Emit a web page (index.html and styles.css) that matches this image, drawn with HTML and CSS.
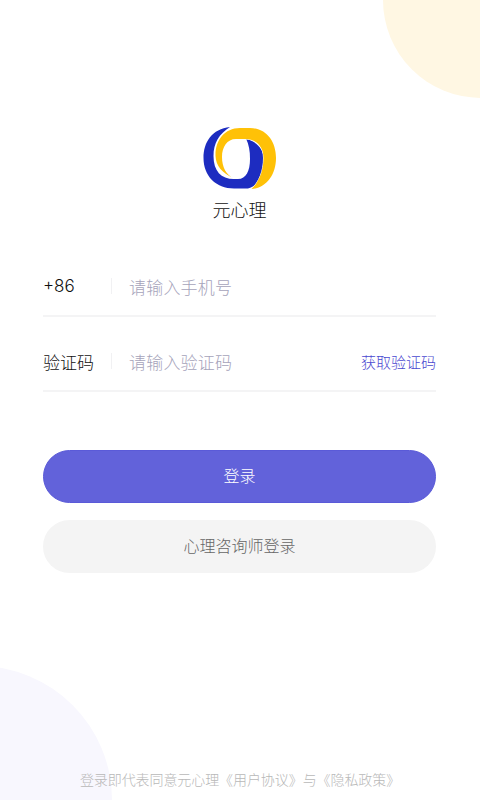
FILE: index.html
```html
<!DOCTYPE html>
<html lang="zh">
<head>
<meta charset="utf-8">
<title>元心理</title>
<link rel="stylesheet" href="styles.css">
</head>
<body>
<main class="page">
  <div class="blob blob-top"></div>
  <div class="blob blob-bottom"></div>
  <div class="brand">
    <svg class="logo" viewBox="203 125 74 64" aria-hidden="true">
      <path fill="#1d2cc0" d="M230 126C212 128 203.5 141 203.5 157C203.5 175 216 187.5 234 187.5H248C258 186 263.5 172 263.5 157C263.5 148 257 141 246 137.5C249 144 250 150 250 158C250 170 246 178 238 178H234C221 178 213.5 170 213.5 155C213.5 142 219 133 230 126Z"/>
      <path fill="#ffc107" stroke="#fff" stroke-width="1" paint-order="stroke" d="M234 177.5C222 172 216 165 215.5 155C215 140 224 127 240 127H250C266 127 276 140 276 157C276 174 266 187 251.5 188C259 181 263.5 170 263.5 157C263.5 146 257 138 245 138H236C227 138 222 146 222 156C222 166 226 174 234 177.5Z"/>
    </svg>
    <div class="brand-name">元心理</div>
  </div>
  <form class="form">
    <div class="field">
      <span class="field-label">+86</span>
      <span class="field-sep"></span>
      <span class="field-hint">请输入手机号</span>
    </div>
    <div class="field">
      <span class="field-label">验证码</span>
      <span class="field-sep"></span>
      <span class="field-hint">请输入验证码</span>
      <span class="field-action">获取验证码</span>
    </div>
  </form>
  <div class="actions">
    <div class="btn btn-primary">登录</div>
    <div class="btn btn-secondary">心理咨询师登录</div>
  </div>
  <footer class="legal">登录即代表同意元心理《用户协议》与《隐私政策》</footer>
</main>
</body>
</html>
```

FILE: styles.css
```css
* { box-sizing: border-box; }
html, body { margin: 0; padding: 0; height: 100%; background: #fff; }
body { font-family: "Inter", "Noto Sans CJK SC", sans-serif; font-weight: 300; overflow: hidden; }
.page {
  position: relative;
  width: 480px;
  height: 800px;
  padding: 126px 44px 0 43px;
  display: flex;
  flex-direction: column;
  overflow: hidden;
}
.blob { position: absolute; border-radius: 50%; }
.blob-top { width: 196px; height: 196px; left: 383px; top: -98px; background: #fff7e3; }
.blob-bottom { width: 268px; height: 268px; left: -156px; top: 666px; background: #f8f7fe; }
.brand { position: relative; display: flex; flex-direction: column; align-items: center; }
.logo { width: 74px; height: 64px; display: block; }
.brand-name { margin-top: 9px; margin-bottom: -1px; font-size: 18px; line-height: 24px; color: #111; }
.form { position: relative; margin-top: 28px; }
.field {
  display: flex;
  align-items: center;
  height: 67px;
  border-bottom: 2px solid #f4f4f5;
  margin-bottom: 8px;
  padding-top: 7px;
}
.field-label { width: 68px; font-size: 17px; color: #111; }
.field-sep { width: 1px; height: 16px; background: #f1f1f3; }
.field-hint { margin-left: 17px; font-size: 17px; letter-spacing: 0.2px; color: #a5a3ba; }
.field-action { margin-left: auto; font-size: 15px; color: #4a48d0; }
.actions { position: relative; margin-top: 50px; display: flex; flex-direction: column; gap: 17px; }
.btn {
  height: 53px;
  border-radius: 27px;
  display: flex;
  align-items: center;
  justify-content: center;
  font-size: 16px;
  padding-bottom: 3px;
}
.btn-primary { background: #6262da; border: 1px solid #5a5ad8; color: #fff; }
.btn-secondary { background: #f4f4f4; color: #666; }
.legal {
  position: absolute;
  left: 0;
  right: 0;
  bottom: 10px;
  text-align: center;
  font-size: 14px;
  letter-spacing: -0.08px;
  line-height: 20px;
  color: #b8b8b8;
}
```
